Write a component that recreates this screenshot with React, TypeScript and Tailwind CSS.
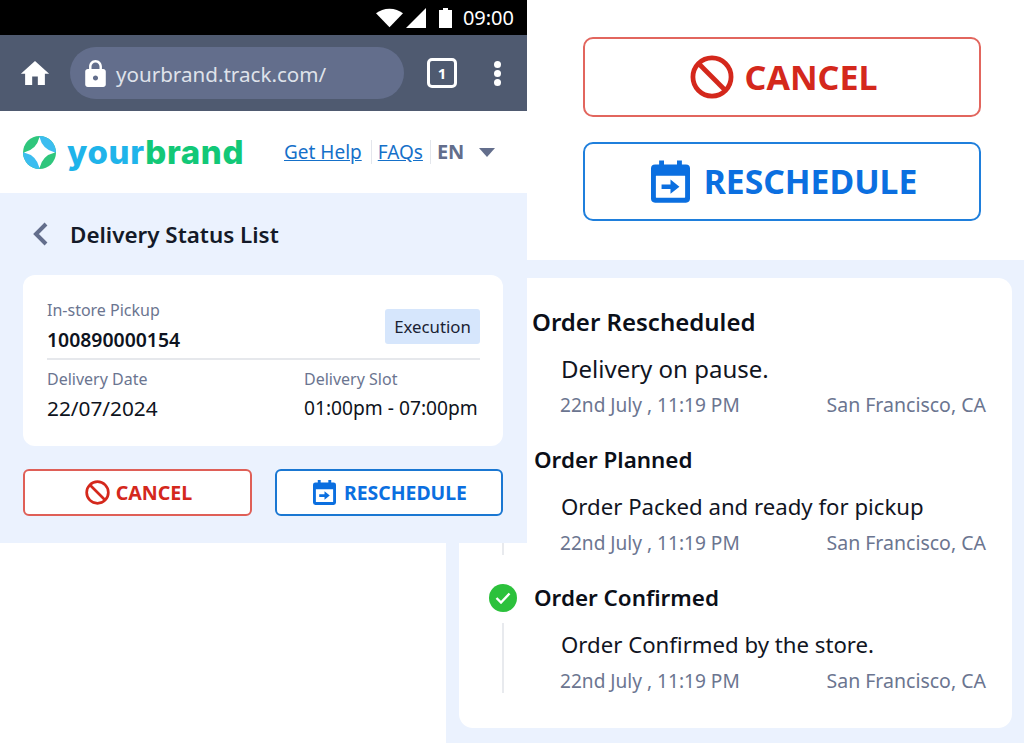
import React from 'react';

const CancelIcon = ({ className }: { className: string }) => (
  <svg viewBox="0 0 24 24" className={className} fill="none" stroke="currentColor" strokeWidth="2.6">
    <circle cx="12" cy="12" r="10.4" />
    <path d="M4.8 4.8l14.4 14.4" />
  </svg>
);

const CalendarIcon = ({ className }: { className: string }) => (
  <svg viewBox="0 0 24 26" className={className} fill="currentColor">
    <path d="M5 0h3v2.5h8V0h3v2.5h2.5A2.5 2.5 0 0 1 24 5v18.5a2.5 2.5 0 0 1-2.500 2.500h-19A2.500 2.500 0 0 1 0 23.500V5a2.500 2.500 0 0 1 2.500-2.500H5zM3 9.500v13.200c0 .2.1.3.3.3h17.400c.2 0 .3-.1.3-.3V9.500z" />
    <path d="M6.500 14.800h5.500v-3l5.500 4.400-5.500 4.400v-3H6.500z" />
  </svg>
);

const Logo = () => (
  <svg viewBox="0 0 34 34" className="h-[33px] w-[33px] shrink-0">
    <circle cx="17" cy="17" r="17" fill="#2fc67c" />
    <path d="M0 17a17 17 0 0 0 17 17V17z" fill="#3cbdf0" />
    <path d="M17 0a17 17 0 0 1 17 17H17z" fill="#3cbdf0" />
    <path d="M17 1Q20 14 33 17Q20 20 17 33Q14 20 1 17Q14 14 17 1z" fill="#fff" />
  </svg>
);

const StatusBar = () => (
  <div className="flex h-[35px] items-center justify-end bg-black pr-[13px] text-white">
    <svg viewBox="0 0 26 18" className="h-[20px] w-[27px]" fill="currentColor">
      <path d="M13 18L0 4.500C3.500 1.500 8 0 13 0s9.500 1.500 13 4.500z" />
    </svg>
    <svg viewBox="0 0 20 20" className="ml-[3px] h-[20px] w-[20px]" fill="currentColor">
      <path d="M20 0v20H0z" />
    </svg>
    <svg viewBox="0 0 13 20" className="ml-[13px] h-[20px] w-[13px]" fill="currentColor">
      <path d="M4 0h5v2h4v18H0V2h4z" />
    </svg>
    <span className="ml-[11px] text-[20px] leading-none">09:00</span>
  </div>
);

const BrowserBar = () => (
  <div className="flex h-[76px] items-center bg-[#4f5a70] pl-[20px] text-white">
    <svg viewBox="2 3 20 17" className="h-[24px] w-[30px]" fill="#fff">
      <path d="M10 20v-6h4v6h5v-8h3L12 3 2 12h3v8z" />
    </svg>
    <div className="ml-[20px] flex h-[52px] w-[334px] items-center rounded-full bg-[#636e8c] pl-[15px]">
      <svg viewBox="4 1 16 21" className="h-[27px] w-[21px]" fill="#fff">
        <path d="M18 8h-1V6c0-2.760-2.240-5-5-5S7 3.240 7 6v2H6c-1.100 0-2 .9-2 2v10c0 1.100.9 2 2 2h12c1.100 0 2-.9 2-2V10c0-1.100-.9-2-2-2zm-6 9c-1.100 0-2-.9-2-2s.9-2 2-2 2 .9 2 2-.9 2-2 2zm3.100-9H8.900V6c0-1.710 1.390-3.100 3.100-3.100 1.710 0 3.100 1.390 3.100 3.100v2z" />
      </svg>
      <span className="ml-[10px] pt-[2px] text-[20.6px] text-[#dfe2ea]">yourbrand.track.com/</span>
    </div>
    <div className="ml-[23px] flex h-[30px] w-[30px] items-center justify-center rounded-[5px] border-[3px] border-white text-[15px] font-bold">1</div>
    <div className="ml-[37px] flex flex-col gap-[2px]">
      <span className="h-[7px] w-[7px] rounded-full bg-white"></span>
      <span className="h-[7px] w-[7px] rounded-full bg-white"></span>
      <span className="h-[7px] w-[7px] rounded-full bg-white"></span>
    </div>
  </div>
);

const SiteHeader = () => (
  <div className="flex h-[82px] items-center bg-white pl-[23px]">
    <Logo />
    <span className="ml-[11px] w-[177px] whitespace-nowrap font-['Inter',sans-serif] text-[33px] font-extrabold leading-none tracking-[0.65px] text-[#1fb4ea]">
      your<span className="text-[#12c877]">brand</span>
    </span>
    <a className="ml-[40px] text-[19px] text-[#1570c9] underline">Get Help</a>
    <span className="ml-[9px] h-[24px] w-px bg-[#e3e6ec]"></span>
    <a className="ml-[6px] text-[19px] text-[#1570c9] underline">FAQs</a>
    <span className="ml-[7px] h-[24px] w-px bg-[#e3e6ec]"></span>
    <span className="ml-[6px] text-[20px] font-bold text-[#636e8c]">EN</span>
    <svg viewBox="0 0 16 9" className="ml-[15px] h-[9px] w-[16px]" fill="#636e8c">
      <path d="M0 0h16L8 9z" />
    </svg>
  </div>
);

const DeliveryCard = () => (
  <div className="mt-[22px] h-[171px] rounded-[12px] bg-white pl-[24px] pr-[23px] pt-[24px]">
    <div className="flex h-[61px] items-start justify-between border-b-2 border-[#e6e8ec]">
      <div>
        <div className="text-[16px] leading-[22px] text-[#6b7590]">In-store Pickup</div>
        <div className="mt-[5px] text-[19.4px] font-semibold leading-[28px] text-[#0e1320]">100890000154</div>
      </div>
      <div className="mt-[10px] flex h-[35px] w-[95px] items-center justify-center rounded-[3px] bg-[#d6e6fc] text-[16.8px] text-[#1a2233]">Execution</div>
    </div>
    <div className="mt-[8px] flex">
      <div className="w-[257px] shrink-0">
        <div className="text-[16px] leading-[22px] text-[#6b7590]">Delivery Date</div>
        <div className="mt-[4px] text-[20.8px] leading-[28px] text-[#0e1320]">22/07/2024</div>
      </div>
      <div className="shrink-0">
        <div className="text-[16px] leading-[22px] text-[#6b7590]">Delivery Slot</div>
        <div className="mt-[4px] whitespace-nowrap text-[19.2px] leading-[28px] text-[#0e1320]">01:00pm - 07:00pm</div>
      </div>
    </div>
  </div>
);

const PhonePanel = () => (
  <div className="absolute left-0 top-0 z-10 w-[527px]">
    <StatusBar />
    <BrowserBar />
    <SiteHeader />
    <div className="h-[350px] bg-[#ebf2fe] pl-[23px] pr-[24px] pt-[22px]">
      <div className="flex h-[38px] items-center">
        <svg viewBox="0 0 16 24" className="ml-[9px] h-[24px] w-[16px]" fill="none" stroke="#636e8c" strokeWidth="4">
          <path d="M14 2L4 12l10 10" />
        </svg>
        <span className="ml-[22px] pt-[1px] text-[22.4px] font-semibold text-[#141a28]">Delivery Status List</span>
      </div>
      <DeliveryCard />
      <div className="mt-[23px] flex justify-between">
        <button className="flex h-[47px] w-[229px] items-center justify-center rounded-[6px] border-2 border-[#df5f57] bg-white pl-[2px] text-[19.6px] font-bold text-[#d4281c]">
          <CancelIcon className="h-[25px] w-[25px]" />
          <span className="ml-[6px]">CANCEL</span>
        </button>
        <button className="flex h-[47px] w-[228px] items-center justify-center rounded-[6px] border-2 border-[#1a77d2] bg-white pl-[2px] text-[19.4px] font-bold text-[#0b6fe0]">
          <CalendarIcon className="h-[25px] w-[23px]" />
          <span className="ml-[8px]">RESCHEDULE</span>
        </button>
      </div>
    </div>
  </div>
);

const LargeButtons = () => (
  <div className="absolute left-[583px] top-[37px] flex w-[398px] flex-col gap-[25px]">
    <button className="flex h-[80px] items-center justify-center rounded-[10px] border-2 border-[#e2665e] bg-white pl-[3px] text-[34px] font-bold text-[#d4281c]">
      <CancelIcon className="h-[44px] w-[44px]" />
      <span className="ml-[11px]">CANCEL</span>
    </button>
    <button className="flex h-[79px] items-center justify-center rounded-[10px] border-2 border-[#1f7fdc] bg-white pl-[4px] text-[33.7px] font-bold text-[#0b6fe0]">
      <CalendarIcon className="h-[43px] w-[39px]" />
      <span className="ml-[14px]">RESCHEDULE</span>
    </button>
  </div>
);

const events = [
  {
    title: 'Order Rescheduled',
    note: 'Delivery on pause.',
    titleClass: 'pl-[73px] text-[24px]',
    noteClass: 'text-[24px]',
  },
  {
    title: 'Order Planned',
    note: 'Order Packed and ready for pickup',
    titleClass: 'pl-[75px] text-[22.4px]',
    noteClass: 'text-[22.2px]',
  },
  {
    title: 'Order Confirmed',
    note: 'Order Confirmed by the store.',
    titleClass: 'pl-[75px] text-[22.4px]',
    noteClass: 'text-[22.2px]',
  },
];

const TimelinePanel = () => (
  <div className="absolute left-[446px] top-[260px] h-[483px] w-[578px] bg-[#ebf2fe] pl-[13px] pr-[12px] pt-[18px]">
    <div className="relative h-[450px] rounded-[14px] bg-white pr-[26px] pt-[26px]">
      {/* rail, mostly hidden behind the phone panel */}
      <span className="absolute left-[43px] top-[345px] h-[70px] w-[2px] bg-[#e8eaee]"></span>
      <span className="absolute left-[43px] top-[265px] h-[12px] w-[2px] bg-[#e8eaee]"></span>
      <span className="absolute left-[30px] top-[306px] flex h-[28px] w-[28px] items-center justify-center rounded-full bg-[#2cc13c]">
        <svg viewBox="0 0 16 12" className="h-[12px] w-[16px]" fill="none" stroke="#fff" strokeWidth="2.400">
          <path d="M1.500 6l4.500 4.500L14.500 1.500" />
        </svg>
      </span>
      {events.map((event) => (
        <div key={event.title} className="h-[138px]">
          <div className={`${event.titleClass} font-semibold leading-[36px] text-[#0b0f18]`}>{event.title}</div>
          <div className={`${event.noteClass} mt-[11px] pl-[102px] leading-[36px] text-[#11151f]`}>{event.note}</div>
          <div className="flex items-baseline justify-between pl-[101px] leading-[36px] text-[#6b7590]">
            <span className="text-[19.1px]">22nd July , 11:19 PM</span>
            <span className="text-[19.5px]">San Francisco, CA</span>
          </div>
        </div>
      ))}
    </div>
  </div>
);

export default function App() {
  return (
    <div className="relative h-[743px] w-[1024px] overflow-hidden bg-white font-['Noto_Sans',sans-serif]">
      <LargeButtons />
      <TimelinePanel />
      <PhonePanel />
    </div>
  );
}
